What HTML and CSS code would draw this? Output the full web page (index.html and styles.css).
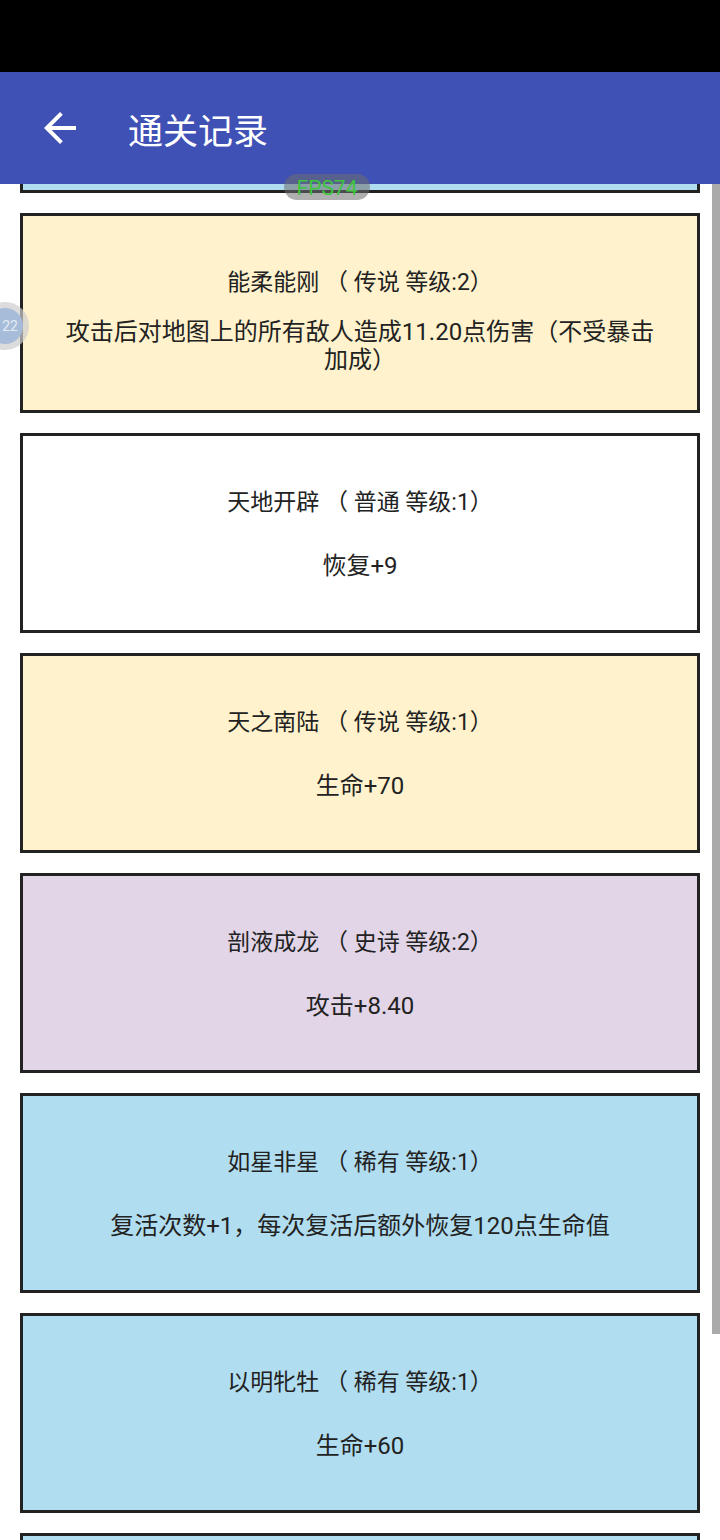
FILE: index.html
```html
<!DOCTYPE html>
<html lang="zh-CN">

<head>
    <meta charset="UTF-8">
    <meta name="viewport" content="width=device-width, initial-scale=1.0">
    <title>通关记录</title>
    <link rel="stylesheet" href="styles.css">
</head>

<body>

    <div class="status-bar"></div>

    <div class="app-bar">
        <button class="back-btn">
            <svg width="48" height="48" viewBox="0 0 24 24">
                <path fill="#fff" d="M20 11H7.83l5.59-5.59L12 4l-8 8 8 8 1.41-1.41L7.83 13H20v-2z" />
            </svg>
        </button>
        <h1>通关记录</h1>
    </div>

    <div class="fps">FPS74</div>

    <div class="float-ball">
        <div class="float-ball-inner">22</div>
    </div>

    <div class="content">
        <div class="record-list">
            <div class="card rare">
                <div class="card-title">以明牝牡<span class="grade">（<span class="rank">稀有 等级:1</span>）</span></div>
                <div class="card-desc">生命+60</div>
            </div>
            <div class="card legend">
                <div class="card-title">能柔能刚<span class="grade">（<span class="rank">传说 等级:2</span>）</span></div>
                <div class="card-desc">攻击后对地图上的所有敌人造成11.20点伤害（不受暴击加成）</div>
            </div>
            <div class="card normal">
                <div class="card-title">天地开辟<span class="grade">（<span class="rank">普通 等级:1</span>）</span></div>
                <div class="card-desc">恢复+9</div>
            </div>
            <div class="card legend">
                <div class="card-title">天之南陆<span class="grade">（<span class="rank">传说 等级:1</span>）</span></div>
                <div class="card-desc">生命+70</div>
            </div>
            <div class="card epic">
                <div class="card-title">剖液成龙<span class="grade">（<span class="rank">史诗 等级:2</span>）</span></div>
                <div class="card-desc">攻击+8.40</div>
            </div>
            <div class="card rare">
                <div class="card-title">如星非星<span class="grade">（<span class="rank">稀有 等级:1</span>）</span></div>
                <div class="card-desc">复活次数+1，每次复活后额外恢复120点生命值</div>
            </div>
            <div class="card rare">
                <div class="card-title">以明牝牡<span class="grade">（<span class="rank">稀有 等级:1</span>）</span></div>
                <div class="card-desc">生命+60</div>
            </div>
            <div class="card rare">
                <div class="card-title">如星非星<span class="grade">（<span class="rank">稀有 等级:1</span>）</span></div>
                <div class="card-desc">复活次数+1，每次复活后额外恢复120点生命值</div>
            </div>
        </div>
        <div class="scrollbar"></div>
    </div>

</body>

</html>
```

FILE: styles.css
```css
body {
    margin: 0;
    width: 720px;
    height: 1540px;
    overflow: hidden;
    background-color: white;
    font-family: Roboto, "Noto Sans CJK SC", sans-serif;
    color: #222;
    position: relative;
}

.status-bar {
    height: 72px;
    background-color: #000;
}

.app-bar {
    height: 112px;
    background-color: #3f51b5;
    display: flex;
    align-items: center;
    padding-left: 36px;
}

.back-btn {
    background: none;
    border: none;
    padding: 0;
    margin: 0;
    width: 48px;
    height: 48px;
}

    .back-btn svg {
        display: block;
    }

.app-bar h1 {
    margin: 0 0 0 44px;
    color: white;
    font-size: 35px;
    font-weight: normal;
}

.content {
    height: 1356px;
    overflow: hidden;
    position: relative;
}

/* list is scrolled: the first card is mostly hidden under the app bar */
.record-list {
    padding: 0 20px;
    margin-top: -191px;
}

.card {
    height: 200px;
    box-sizing: border-box;
    border: 3px solid #222;
    margin-bottom: 20px;
    padding: 53px 40px 15px;
    display: flex;
    flex-direction: column;
    text-align: center;
}

.card-title {
    font-size: 23px;
    line-height: 28px;
}

    .card-title .grade {
        margin-left: 0.25em;
    }

    .card-title .rank {
        margin-left: 0.25em;
    }

.card-desc {
    flex: 1;
    display: flex;
    align-items: center;
    justify-content: center;
    font-size: 24px;
    line-height: 28px;
}

.normal {
    background-color: #ffffff;
}

.rare {
    background-color: #b1ddf0;
}

.epic {
    background-color: #e1d5e7;
}

.legend {
    background-color: #fff2cc;
}

.scrollbar {
    position: absolute;
    top: 0;
    right: 0;
    width: 8px;
    height: 1150px;
    background-color: #aaa;
}

.fps {
    position: absolute;
    top: 174px;
    left: 284px;
    width: 86px;
    height: 26px;
    border-radius: 13px;
    background-color: rgba(110, 110, 110, 0.55);
    color: #3ec43e;
    font-size: 21px;
    line-height: 28px;
    text-align: center;
    z-index: 2;
}

.float-ball {
    position: absolute;
    top: 302px;
    left: -19px;
    width: 48px;
    height: 48px;
    border-radius: 50%;
    background-color: rgba(205, 205, 205, 0.7);
    display: flex;
    align-items: center;
    justify-content: center;
    z-index: 2;
}

.float-ball-inner {
    width: 36px;
    height: 36px;
    border-radius: 50%;
    background-color: #a7bcd8;
    color: #e4ecf5;
    font-size: 14px;
    line-height: 36px;
    text-align: center;
    text-indent: 10px;
}
```
